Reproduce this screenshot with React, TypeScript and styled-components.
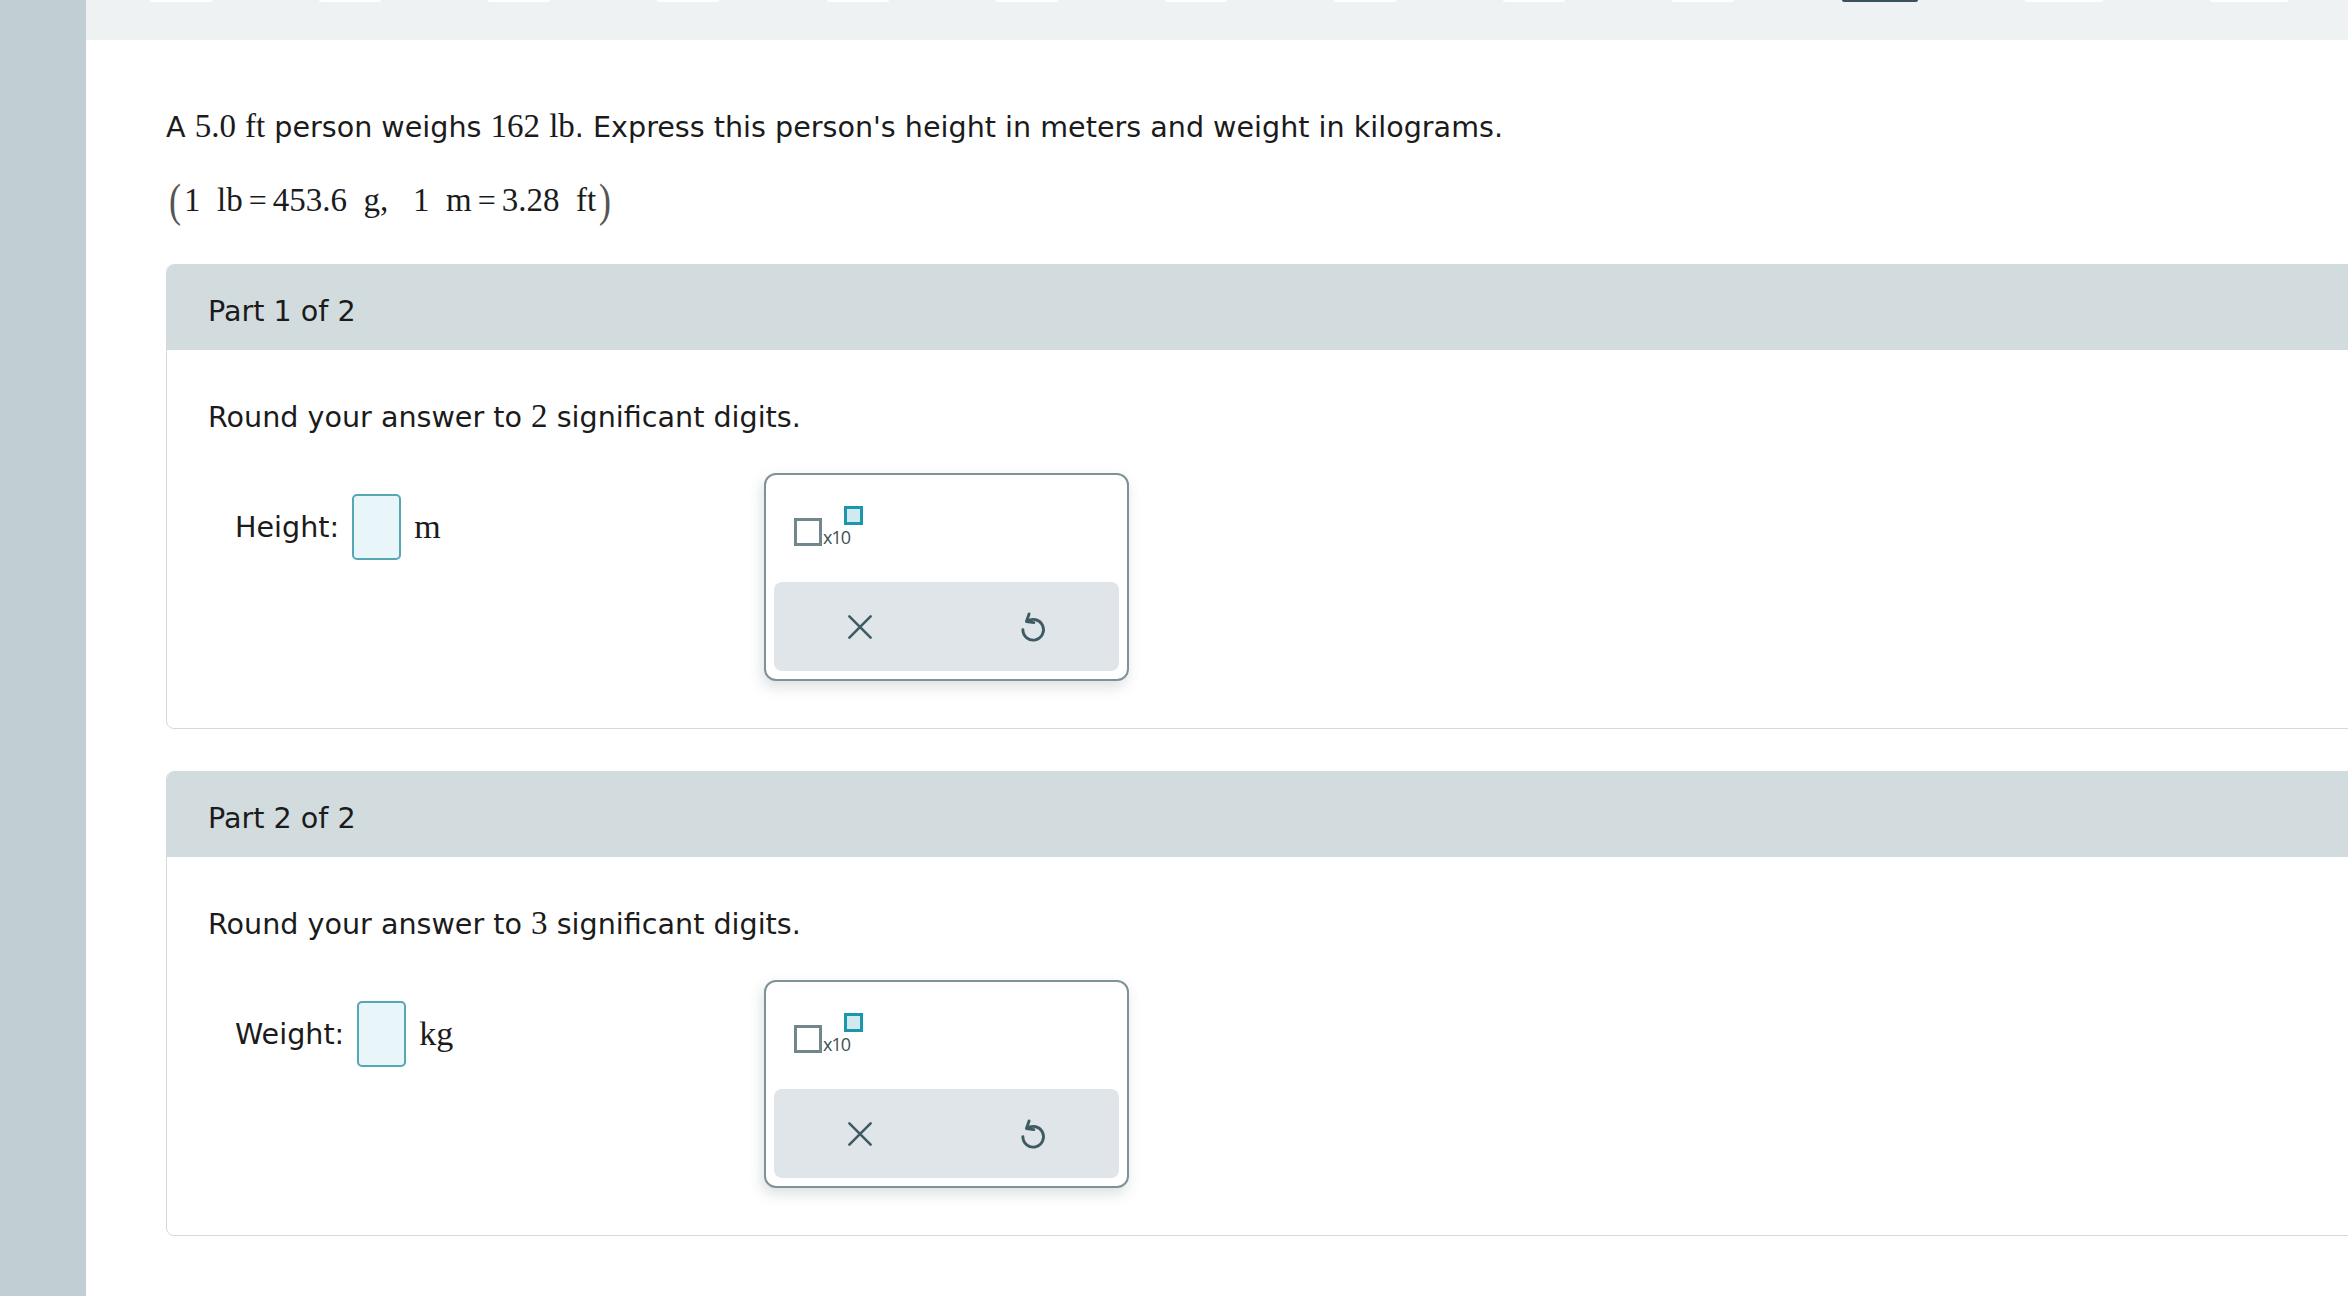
import React from 'react';
import styled, { createGlobalStyle } from 'styled-components';

const GlobalStyle = createGlobalStyle`
  html, body {
    margin: 0;
    padding: 0;
    background: #ffffff;
  }
  body {
    font-family: 'DejaVu Sans', Verdana, sans-serif;
    color: #1b1b1b;
  }
`;

const segments = [62, 62, 62, 62, 62, 62, 62, 62, 62, 62, 76, 78, 78];
const currentSegment = 10;

interface PartProps {
  index: number;
  digits: number;
  label: string;
  unit: string;
}

const parts: PartProps[] = [
  { index: 1, digits: 2, label: 'Height:', unit: 'm' },
  { index: 2, digits: 3, label: 'Weight:', unit: 'kg' },
];

function ClearIcon() {
  return (
    <svg width="30" height="30" viewBox="0 0 24 24" fill="none" stroke="#3e5b64" strokeWidth="2.1" strokeLinecap="round">
      <path d="M3.5 3.5 L20.5 20.5 M20.5 3.5 L3.5 20.5" />
    </svg>
  );
}

function UndoIcon() {
  return (
    <svg width="33" height="36" viewBox="0 0 24 26" fill="none" stroke="#3e5b64" strokeWidth="2.1" strokeLinecap="round" strokeLinejoin="round">
      <path d="M5 15 A7.5 7.5 0 1 0 8 9" />
      <path d="M9.5 3.5 L7.6 9 L13 9.8" />
    </svg>
  );
}

function Part({ index, digits, label, unit }: PartProps) {
  return (
    <S.Panel>
      <S.PanelHeader>
        Part {index} of {parts.length}
      </S.PanelHeader>
      <S.PanelBody>
        <S.Instruction>
          Round your answer to <S.Math>{digits}</S.Math> significant digits.
        </S.Instruction>
        <S.AnswerRow>
          <S.Field>
            <S.FieldLabel>{label}</S.FieldLabel>
            <S.InputBox />
            <S.Unit>{unit}</S.Unit>
          </S.Field>
          <S.Keypad>
            <S.KeypadTop>
              <S.Sci>
                <S.BaseBox />
                <S.TimesTen>x10</S.TimesTen>
                <S.ExpBox />
              </S.Sci>
            </S.KeypadTop>
            <S.KeypadActions>
              <S.ActionButton aria-label="clear">
                <ClearIcon />
              </S.ActionButton>
              <S.ActionButton aria-label="undo">
                <UndoIcon />
              </S.ActionButton>
            </S.KeypadActions>
          </S.Keypad>
        </S.AnswerRow>
      </S.PanelBody>
    </S.Panel>
  );
}

export default function App() {
  return (
    <>
      <GlobalStyle />
      <S.Page>
        <S.Sidebar />
        <S.Main>
          <S.TopBar>
            {segments.map((w, i) => (
              <S.Segment key={i} $width={w} $current={i === currentSegment} />
            ))}
          </S.TopBar>
          <S.Content>
            <S.Question>
              A <S.Math>5.0</S.Math> <S.Math>ft</S.Math> person weighs <S.Math>162</S.Math> <S.Math>lb</S.Math>. Express
              this person's height in meters and weight in kilograms.
            </S.Question>
            <S.Conversion>
              <S.Paren>(</S.Paren>
              <S.Math>1&nbsp;&nbsp;lb</S.Math>
              <S.Eq>=</S.Eq>
              <S.Math>453.6&nbsp;&nbsp;g,&nbsp;&nbsp;&nbsp;1&nbsp;&nbsp;m</S.Math>
              <S.Eq>=</S.Eq>
              <S.Math>3.28&nbsp;&nbsp;ft</S.Math>
              <S.Paren>)</S.Paren>
            </S.Conversion>
            {parts.map((p) => (
              <Part key={p.index} {...p} />
            ))}
          </S.Content>
        </S.Main>
      </S.Page>
    </>
  );
}

const S = {
  Page: styled.div`
    display: flex;
    min-height: 100vh;
    overflow: hidden;
  `,
  Sidebar: styled.div`
    width: 86px;
    flex-shrink: 0;
    background: #c1ced3;
  `,
  Main: styled.div`
    flex: 1;
    min-width: 0;
    background: #ffffff;
  `,
  TopBar: styled.div`
    height: 40px;
    background: #eef2f3;
    display: flex;
    justify-content: space-between;
    align-items: flex-start;
    padding: 0 60px 0 64px;
    box-sizing: border-box;
  `,
  Segment: styled.div<{ $width: number; $current: boolean }>`
    width: ${(p) => p.$width}px;
    height: 2px;
    border-radius: 0 0 3px 3px;
    background: ${(p) => (p.$current ? '#3a525c' : '#ffffff')};
  `,
  Content: styled.div`
    padding: 66px 0 60px 80px;
    margin-right: -30px;
  `,
  Question: styled.p`
    margin: 0;
    font-size: 28.6px;
    line-height: 40px;
  `,
  Conversion: styled.p`
    margin: 33px 0 0;
    font-size: 28.6px;
    line-height: 40px;
    display: flex;
    align-items: center;
  `,
  Math: styled.span`
    font-family: 'Liberation Serif', 'Times New Roman', serif;
    font-size: 33px;
  `,
  Eq: styled.span`
    font-family: 'Liberation Serif', 'Times New Roman', serif;
    font-size: 32px;
    margin: 0 6px;
  `,
  Paren: styled.span`
    font-family: 'Liberation Serif', 'Times New Roman', serif;
    font-size: 36px;
    color: #555;
    display: inline-block;
    transform: scaleY(1.3);
    margin: 0 3px;
  `,
  Panel: styled.section`
    margin-top: 44px;
    border: 1px solid #d3dadd;
    border-radius: 8px;
    overflow: hidden;
    & + & {
      margin-top: 42px;
    }
  `,
  PanelHeader: styled.div`
    height: 85px;
    background: #d2dbde;
    display: flex;
    align-items: center;
    padding: 6px 0 0 41px;
    box-sizing: border-box;
    font-size: 28.6px;
  `,
  PanelBody: styled.div`
    padding: 46px 0 47px 41px;
  `,
  Instruction: styled.p`
    margin: 0;
    font-size: 28.6px;
    line-height: 40px;
  `,
  AnswerRow: styled.div`
    display: flex;
    align-items: flex-start;
    margin-top: 36px;
  `,
  Field: styled.div`
    width: 556px;
    flex-shrink: 0;
    box-sizing: border-box;
    padding-left: 27px;
    margin-top: 21px;
    display: flex;
    align-items: center;
    gap: 13px;
  `,
  FieldLabel: styled.span`
    font-size: 28.6px;
  `,
  InputBox: styled.div`
    width: 49px;
    height: 66px;
    box-sizing: border-box;
    border: 2px solid #57a6b3;
    border-radius: 5px;
    background: #e9f6f9;
  `,
  Unit: styled.span`
    font-family: 'Liberation Serif', 'Times New Roman', serif;
    font-size: 34px;
  `,
  Keypad: styled.div`
    width: 365px;
    height: 208px;
    box-sizing: border-box;
    border: 2px solid #7f9298;
    border-radius: 12px;
    background: #ffffff;
    box-shadow: -2px 6px 14px rgba(60, 80, 90, 0.18);
    display: flex;
    flex-direction: column;
  `,
  KeypadTop: styled.div`
    height: 107px;
    padding: 31px 0 0 28px;
    box-sizing: border-box;
  `,
  Sci: styled.div`
    display: flex;
    align-items: flex-end;
    height: 40px;
  `,
  BaseBox: styled.div`
    width: 28px;
    height: 28px;
    box-sizing: border-box;
    border: 3px solid #71878d;
  `,
  TimesTen: styled.span`
    font-family: 'Open Sans', 'DejaVu Sans', sans-serif;
    font-size: 18px;
    letter-spacing: -1px;
    color: #3f4f55;
    line-height: 18px;
    margin: 0 0 0 1px;
    align-self: flex-end;
  `,
  ExpBox: styled.div`
    width: 19px;
    height: 19px;
    box-sizing: border-box;
    border: 3px solid #1b97ab;
    background: #d0eaf0;
    align-self: flex-start;
    margin-left: -6px;
  `,
  KeypadActions: styled.div`
    flex: 1;
    margin: 0 8px 8px;
    background: #dfe5e8;
    border-radius: 8px;
    display: grid;
    grid-template-columns: 1fr 1fr;
  `,
  ActionButton: styled.button`
    border: none;
    background: transparent;
    display: flex;
    align-items: center;
    justify-content: center;
    padding: 0;
    cursor: pointer;
  `,
};
